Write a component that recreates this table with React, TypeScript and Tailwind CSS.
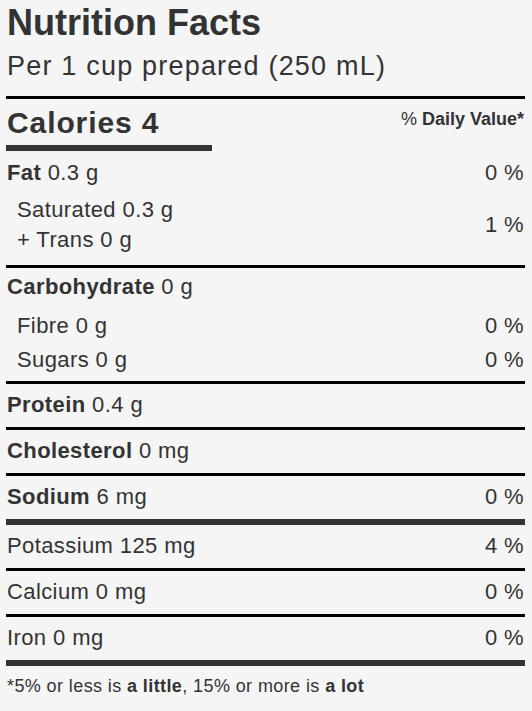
import React from "react";

const Line = () => <div className="h-[3px] bg-black" />;
const Thick = () => <div className="h-[6px] bg-[#333333]" />;

function Row({ label, value, dv }: { label: string; value: string; dv?: string }) {
  return (
    <div className="flex items-center justify-between pt-[9px] pb-[10px] leading-[24px] pl-[1px] pr-[1px]">
      <div>
        <span className="font-bold">{label}</span> {value}
      </div>
      {dv ? <div>{dv}</div> : null}
    </div>
  );
}

function PlainRow({ text, dv }: { text: string; dv?: string }) {
  return (
    <div className="flex items-center justify-between pt-[9px] pb-[10px] leading-[24px] pl-[1px] pr-[1px]">
      <div>{text}</div>
      {dv ? <div>{dv}</div> : null}
    </div>
  );
}

export default function App() {
  return (
    <div
      className="min-h-[711px] bg-[#f5f5f5] pl-[6px] pr-[7px] text-[#333333]"
      style={{ fontFamily: '"Liberation Sans", Arial, Helvetica, sans-serif' }}
    >
      <div className="pl-[1px] text-[36px] font-bold leading-[46px]">Nutrition Facts</div>
      <div className="mt-[5px] mb-[15px] pl-[1px] text-[27px] leading-[30px] tracking-[1.2px]">
        Per 1 cup prepared (250 mL)
      </div>
      <Line />
      <div className="flex items-start justify-between pt-[6px] pb-[4px] pl-[1px] pr-[1px]">
        <div className="text-[30px] font-bold leading-[36px] tracking-[0.9px]">Calories 4</div>
        <div className="pt-[2px] text-[18px] leading-[24px]">
          % <span className="font-bold">Daily Value*</span>
        </div>
      </div>
      <div className="h-[6px] w-[206px] bg-[#333333]" />

      <div className="text-[22px] tracking-[0.4px]">
        <div className="flex items-center justify-between pt-[10px] pb-[9px] leading-[24px] pl-[1px] pr-[1px]">
          <div>
            <span className="font-bold">Fat</span> 0.3 g
          </div>
          <div>0 %</div>
        </div>
        <div className="flex items-center justify-between pt-[1px] pb-[10px] pl-[11px] pr-[1px]">
          <div className="leading-[30px]">
            <div>Saturated 0.3 g</div>
            <div>+ Trans 0 g</div>
          </div>
          <div className="leading-[24px]">1 %</div>
        </div>
        <Line />
        <div className="pb-[5px]">
          <div className="pt-[7px] pb-[9px] leading-[24px] pl-[1px]">
            <span className="font-bold">Carbohydrate</span> 0 g
          </div>
          <div className="flex h-[34px] items-center justify-between pl-[11px] pr-[1px]">
            <div>Fibre 0 g</div>
            <div>0 %</div>
          </div>
          <div className="flex h-[34px] items-center justify-between pl-[11px] pr-[1px]">
            <div>Sugars 0 g</div>
            <div>0 %</div>
          </div>
        </div>
        <Line />
        <Row label="Protein" value="0.4 g" />
        <Line />
        <Row label="Cholesterol" value="0 mg" />
        <Line />
        <Row label="Sodium" value="6 mg" dv="0 %" />
        <Thick />
        <PlainRow text="Potassium 125 mg" dv="4 %" />
        <Line />
        <PlainRow text="Calcium 0 mg" dv="0 %" />
        <Line />
        <PlainRow text="Iron 0 mg" dv="0 %" />
        <Thick />
      </div>
      <div className="pt-[8px] pl-[1px] text-[18px] leading-[24px] tracking-[0.4px]">
        *5% or less is <span className="font-bold">a little</span>, 15% or more is{" "}
        <span className="font-bold">a lot</span>
      </div>
    </div>
  );
}
